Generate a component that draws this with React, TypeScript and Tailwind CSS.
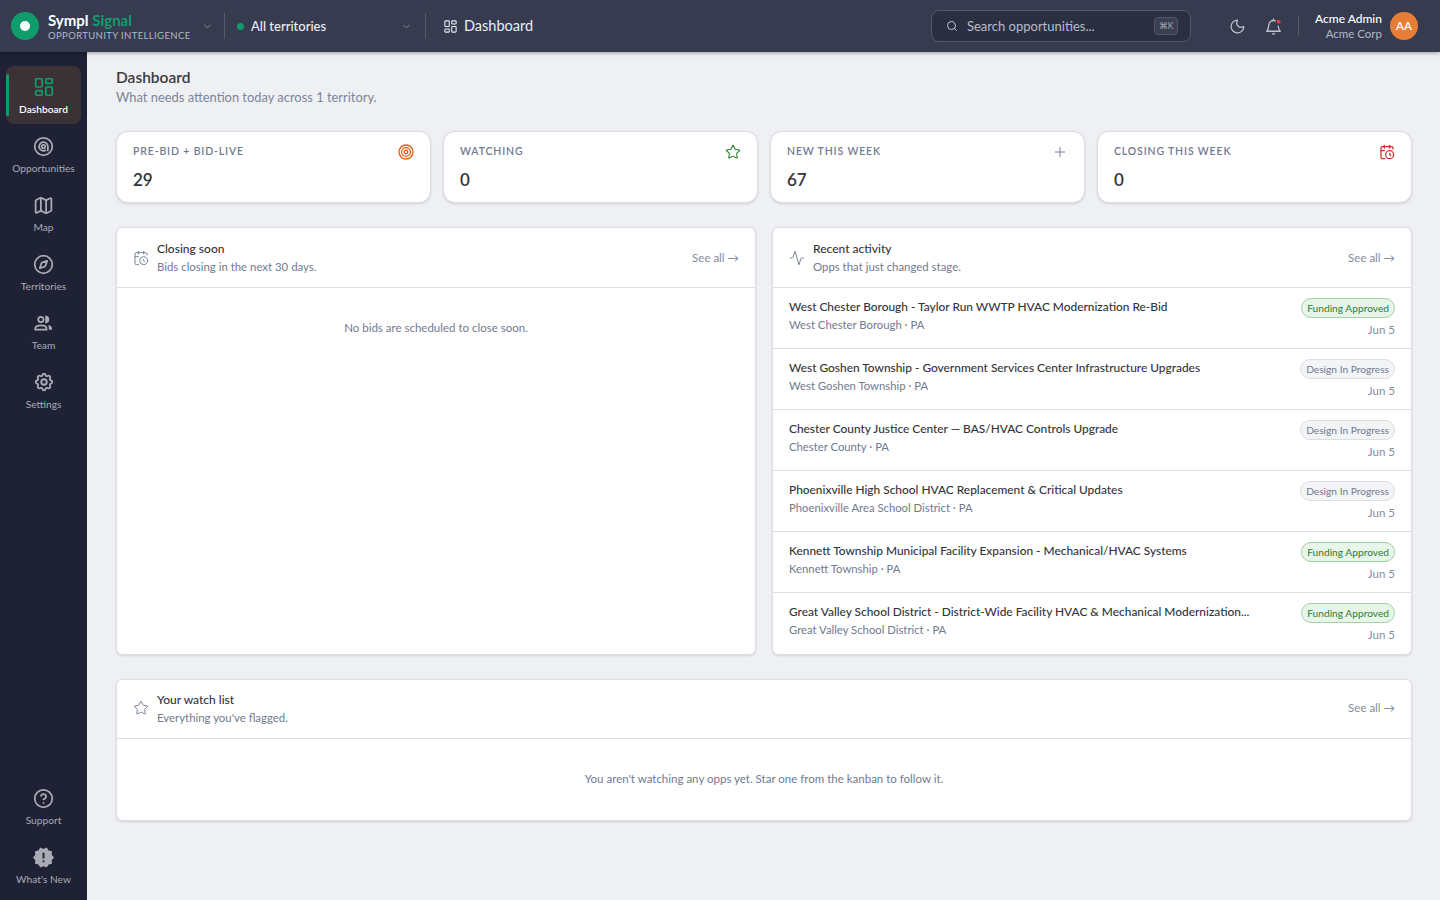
import { Activity, CalendarClock, ChevronDown, LayoutDashboard, Map, Moon, Plus, Search, Star, Compass, CircleHelp } from "lucide-react";
import { MdNewReleases } from "react-icons/md";
import { TbSettings } from "react-icons/tb";
import type { ReactNode } from "react";

const activity = [
  { title: "West Chester Borough - Taylor Run WWTP HVAC Modernization Re-Bid", org: "West Chester Borough", stage: "Funding Approved" },
  { title: "West Goshen Township - Government Services Center Infrastructure Upgrades", org: "West Goshen Township", stage: "Design In Progress" },
  { title: "Chester County Justice Center — BAS/HVAC Controls Upgrade", org: "Chester County", stage: "Design In Progress" },
  { title: "Phoenixville High School HVAC Replacement & Critical Updates", org: "Phoenixville Area School District", stage: "Design In Progress" },
  { title: "Kennett Township Municipal Facility Expansion - Mechanical/HVAC Systems", org: "Kennett Township", stage: "Funding Approved" },
  { title: "Great Valley School District - District-Wide Facility HVAC & Mechanical Modernization...", org: "Great Valley School District", stage: "Funding Approved" },
];

function TargetAt() {
  return (
    <svg viewBox="0 0 24 24" className="w-[21px] h-[21px]" fill="none" stroke="currentColor" strokeWidth="2">
      <circle cx="12" cy="12" r="10" />
      <path d="M17 17.5V12a5 5 0 1 0-2 4" />
      <circle cx="12" cy="12" r="2" />
    </svg>
  );
}

function TeamIcon() {
  return (
    <svg viewBox="0 0 24 24" className="w-[21px] h-[21px]" fill="none" stroke="currentColor" strokeWidth="2">
      <circle cx="9" cy="7.5" r="3" />
      <path d="M15 4.2a3.4 3.4 0 0 1 0 6.6z" fill="currentColor" />
      <path d="M2.5 19v-1.2c0-2.4 2.9-3.8 6.5-3.8s6.5 1.4 6.5 3.8V19z" />
      <path d="M17.5 13.8c2.3.4 4.2 1.5 4.2 3.500V19h-3.600c0-2-.2-3.800-.6-5.200z" fill="currentColor" stroke="none" />
    </svg>
  );
}

function BellDot() {
  return (
    <svg viewBox="0 0 24 24" className="w-[19px] h-[19px]" fill="none" stroke="#c2c5ce" strokeWidth="1.6" strokeLinecap="round" strokeLinejoin="round">
      <path d="M12 2.5V4.5" />
      <path d="M14.5 5a6 6 0 0 0-8.500 5.500c0 4.500-1.500 6.500-2.500 7.500h17c-1-1-2.500-3-2.500-6.500" />
      <path d="M10.5 21a2 2 0 0 0 3 0" />
      <circle cx="18.5" cy="6" r="2.6" fill="#e5383b" stroke="none" />
    </svg>
  );
}

function NavItem({ icon, label, active }: { icon: ReactNode; label: string; active?: boolean }) {
  return (
    <div className={`relative h-[58px] w-[75px] rounded-lg flex flex-col items-center pt-[10px] ${active ? "bg-[#3b3236] text-white font-semibold" : "text-[#a9abb5]"}`}>
      {active && <span className="absolute left-0 top-[8px] bottom-[8px] w-[3px] bg-[#0f9d6b] rounded-full" />}
      <span className={`h-[22px] flex items-center ${active ? "text-[#0f9d6b]" : ""}`}>{icon}</span>
      <span className="mt-[4px] text-[10.2px] leading-[14px] whitespace-nowrap">{label}</span>
    </div>
  );
}

function Stat({ label, value, icon }: { label: string; value: string; icon: ReactNode }) {
  return (
    <div className="h-[72px] bg-white rounded-xl border border-[#dbdde3] shadow-sm px-4 pt-[13px]">
      <div className="flex items-center justify-between h-[14px]">
        <span className="text-[10.5px] font-semibold tracking-[0.08em] text-[#717a8f] uppercase">{label}</span>
        {icon}
      </div>
      <div className="mt-[9px] text-[17px] leading-[24px] font-semibold text-[#33343a]">{value}</div>
    </div>
  );
}

function PanelHead({ icon, title, sub, big }: { icon: ReactNode; title: string; sub: string; big?: boolean }) {
  return (
    <div className={`flex items-center px-4 border-b border-[#dcdee3] ${big ? "h-[60px]" : "h-[59px] pb-[2px]"}`}>
      <span className="w-[24px] text-[#6f7a90] flex items-center">{icon}</span>
      <div className="flex-1">
        <div className="text-[12px] leading-[18px] font-medium text-[#33343a]">{title}</div>
        <div className="text-[11.4px] leading-[17px] text-[#717a8f]">{sub}</div>
      </div>
      <span className="text-[11.5px] text-[#858da0] whitespace-nowrap">See all →</span>
    </div>
  );
}

export default function App() {
  return (
    <div className="h-[900px] flex flex-col bg-[#eef0f4] overflow-hidden" style={{ fontFamily: "Lato, 'Noto Sans', sans-serif" }}>
      <header className="h-[52px] shrink-0 bg-[#363b50] flex items-center pl-[11px] pr-[22px] text-white shadow-[0_1px_4px_rgba(0,0,0,0.35)] z-10">
        <div className="w-[28px] h-[28px] rounded-full bg-[#0f9d6b] flex items-center justify-center">
          <span className="w-[10px] h-[10px] rounded-full bg-white" />
        </div>
        <div className="ml-[9px] w-[152px] pt-[1px]">
          <div className="text-[15px] leading-[16px] font-bold">Sympl <span className="text-[#0f9d6b]">Signal</span></div>
          <div className="mt-[1px] text-[9.5px] leading-[13px] tracking-[0.04em] text-[#b4b8c4] uppercase whitespace-nowrap">Opportunity Intelligence</div>
        </div>
        <ChevronDown className="w-[11px] h-[11px] text-[#8b90a0] ml-[2px]" />
        <span className="w-px h-[26px] bg-[#555a6c] ml-[11px]" />
        <span className="w-[7px] h-[7px] rounded-full bg-[#0f9d6b] ml-[12px]" />
        <span className="ml-[7px] w-[150px] pt-[1px] text-[13px] font-medium text-[#eceef2]">All territories</span>
        <ChevronDown className="w-[11px] h-[11px] text-[#8b90a0]" />
        <span className="w-px h-[26px] bg-[#555a6c] ml-[13px]" />
        <LayoutDashboard className="w-[15px] h-[15px] ml-[17px] text-[#eceef2]" strokeWidth={1.7} />
        <span className="ml-[6px] text-[14.5px] text-[#eceef2]">Dashboard</span>
        <div className="ml-auto w-[260px] h-[32px] rounded-lg bg-[#2b2f42] border border-[#53586b] flex items-center pl-[14px] pr-[12px]">
          <Search className="w-[12px] h-[12px] text-[#c2c5ce]" />
          <span className="ml-[9px] pt-[1px] text-[13px] text-[#b9bcc6]">Search opportunities...</span>
          <span className="ml-auto h-[18px] w-[24px] rounded bg-[#3a3f52] border border-[#53586b] text-[8.5px] text-[#a3a7b4] flex items-center justify-center">⌘K</span>
        </div>
        <Moon className="w-[17px] h-[17px] ml-[38px] text-[#c2c5ce]" strokeWidth={1.7} />
        <span className="ml-[18px] flex"><BellDot /></span>
        <span className="w-px h-[20px] bg-[#555a6c] ml-[15px]" />
        <div className="ml-[16px] text-right">
          <div className="text-[12px] leading-[15px] font-medium whitespace-nowrap">Acme Admin</div>
          <div className="text-[11.5px] leading-[15px] text-[#b4b8c4] whitespace-nowrap">Acme Corp</div>
        </div>
        <div className="ml-[8px] w-[28px] h-[28px] rounded-full bg-[#e77e37] flex items-center justify-center text-[11.5px] font-semibold">AA</div>
      </header>

      <div className="flex flex-1 min-h-0">
        <aside className="w-[87px] shrink-0 bg-[#1f2235] flex flex-col items-center pt-[14px] pb-[6px] gap-[1px]">
          <NavItem active label="Dashboard" icon={<LayoutDashboard className="w-[22px] h-[22px]" strokeWidth={1.9} />} />
          <NavItem label="Opportunities" icon={<TargetAt />} />
          <NavItem label="Map" icon={<Map className="w-[21px] h-[21px]" strokeWidth={2} />} />
          <NavItem label="Territories" icon={<Compass className="w-[21px] h-[21px]" strokeWidth={2} />} />
          <NavItem label="Team" icon={<TeamIcon />} />
          <NavItem label="Settings" icon={<TbSettings className="w-[22px] h-[22px]" />} />
          <div className="mt-auto" />
          <NavItem label="Support" icon={<CircleHelp className="w-[21px] h-[21px]" strokeWidth={2} />} />
          <NavItem label="What's New" icon={<MdNewReleases className="w-[23px] h-[23px]" />} />
        </aside>

        <main className="flex-1 min-w-0 pl-[29px] pr-[28px] pt-[15px]">
          <h1 className="text-[15.5px] leading-[20px] font-semibold text-[#3a3b40]">Dashboard</h1>
          <p className="text-[12.9px] leading-[20px] text-[#7c8598]">What needs attention today across 1 territory.</p>

          <div className="mt-[24px] grid grid-cols-4 gap-[12px]">
            <Stat label="Pre-bid + Bid-live" value="29" icon={<svg viewBox="0 0 16 16" className="w-[16px] h-[16px]" fill="none" stroke="#e8590c" strokeWidth="1.3"><circle cx="8" cy="8" r="7" /><circle cx="8" cy="8" r="4.4" /><circle cx="8" cy="8" r="1.8" /></svg>} />
            <Stat label="Watching" value="0" icon={<Star className="w-[16px] h-[16px] text-[#2e7d32]" strokeWidth={1.6} />} />
            <Stat label="New this week" value="67" icon={<Plus className="w-[16px] h-[16px] text-[#717a8f]" strokeWidth={1.4} />} />
            <Stat label="Closing this week" value="0" icon={<CalendarClock className="w-[16px] h-[16px] text-[#d32f2f]" strokeWidth={1.9} />} />
          </div>

          <div className="mt-[24px] grid grid-cols-2 gap-[16px] h-[428px]">
            <section className="bg-white rounded-md border border-[#dcdee3] shadow-sm">
              <PanelHead big icon={<CalendarClock className="w-[16px] h-[16px]" strokeWidth={1.4} />} title="Closing soon" sub="Bids closing in the next 30 days." />
              <p className="mt-[32px] text-center text-[11.5px] leading-[16px] text-[#717a8f]">No bids are scheduled to close soon.</p>
            </section>
            <section className="bg-white rounded-md border border-[#dcdee3] shadow-sm overflow-hidden">
              <PanelHead big icon={<Activity className="w-[16px] h-[16px]" strokeWidth={1.4} />} title="Recent activity" sub="Opps that just changed stage." />
              {activity.map((a) => (
                <div key={a.title} className="h-[61px] flex justify-between px-4 pt-[10px] border-b border-[#dcdee3] last:border-b-0">
                  <div className="min-w-0">
                    <div className="text-[11.9px] leading-[18px] font-medium text-[#33343a] whitespace-nowrap">{a.title}</div>
                    <div className="text-[11.3px] leading-[18px] text-[#717a8f]">{a.org} · PA</div>
                  </div>
                  <div className="flex flex-col items-end shrink-0">
                    <span className={`h-[20px] px-[5px] rounded-full border text-[10.2px] leading-[18px] whitespace-nowrap ${a.stage === "Funding Approved" ? "bg-[#e8f5e9] border-[#a5d0a8] text-[#2e7d32]" : "bg-[#f3f4f6] border-[#dcdee3] text-[#717a8f]"}`}>{a.stage}</span>
                    <span className="mt-[4px] text-[11.5px] leading-[16px] text-[#858da0]">Jun 5</span>
                  </div>
                </div>
              ))}
            </section>
          </div>

          <section className="mt-[24px] h-[142px] bg-white rounded-md border border-[#dcdee3] shadow-sm">
            <PanelHead icon={<Star className="w-[16px] h-[16px]" strokeWidth={1.4} />} title="Your watch list" sub="Everything you've flagged." />
            <p className="mt-[32px] text-center text-[11.5px] leading-[16px] text-[#717a8f]">You aren't watching any opps yet. Star one from the kanban to follow it.</p>
          </section>
        </main>
      </div>
    </div>
  );
}
